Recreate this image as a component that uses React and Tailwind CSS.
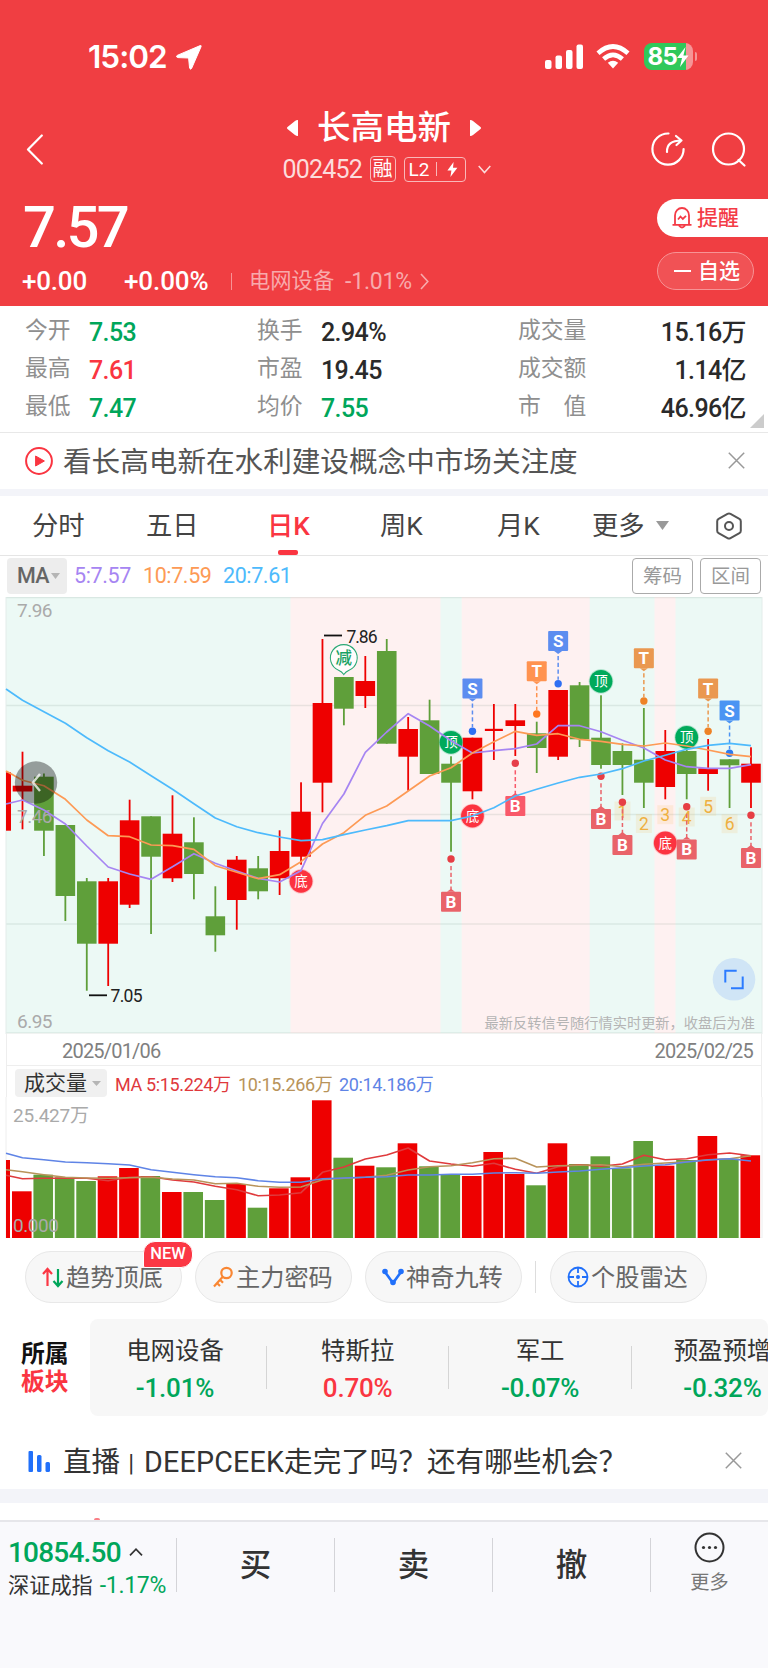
import React from 'react';

const RED = '#ee0000';
const GREEN = '#5f9f3a';

// center of the n-th candle
const cx = (i) => 22.5 + (i - 1) * 21.426;

// [direction, body top, body bottom, high, low, volume top]
const candles = [
  ['up', 785.7, 791.5, 751.7, 829.3, 1191.3],
  ['down', 776.7, 830.7, 773.5, 856, 1174.7],
  ['down', 825, 896, 825, 921, 1177.3],
  ['down', 881.3, 943.7, 878, 990.7, 1181],
  ['up', 881.3, 943.7, 878, 986, 1176.3],
  ['up', 820.3, 904.7, 799.7, 908, 1168],
  ['down', 816.3, 856.7, 816.3, 934, 1176],
  ['up', 833.7, 878.3, 795.3, 882, 1192],
  ['down', 842.3, 874, 817.3, 899.3, 1192],
  ['down', 916.3, 935.3, 886.3, 951.7, 1200],
  ['up', 859.7, 900, 856, 929.7, 1184],
  ['down', 868.3, 891.3, 856, 899.3, 1207.7],
  ['up', 851, 878.3, 830.3, 895, 1188.3],
  ['up', 811.7, 856.7, 782.3, 864.7, 1177.3],
  ['up', 703, 782.7, 639, 812.3, 1100.3],
  ['down', 677, 708.7, 677, 725.3, 1157.7],
  ['up', 681, 696, 656, 708, 1165.7],
  ['down', 651, 743.7, 639, 743.7, 1167.3],
  ['up', 729, 756.7, 717, 790.7, 1143.3],
  ['down', 720.3, 774, 699.7, 774, 1166.3],
  ['down', 763.7, 782.7, 756.3, 851.7, 1174.3],
  ['up', 737.7, 791.3, 737.7, 799.3, 1176],
  ['up', 728.8, 731, 704, 760, 1152],
  ['up', 720.3, 726, 704, 756, 1174],
  ['down', 733.3, 748, 721.7, 773, 1185.3],
  ['up', 690, 756.7, 690, 760, 1143.3],
  ['down', 685.3, 739.3, 682, 747, 1164],
  ['down', 737.7, 765, 695.3, 768.7, 1156.3],
  ['down', 751, 765, 743.3, 795, 1168.3],
  ['down', 759.7, 782.7, 708, 808, 1141],
  ['up', 751, 787, 730, 799.3, 1165.7],
  ['down', 751, 774, 746, 799.3, 1160],
  ['up', 768.3, 774, 739, 790.7, 1136],
  ['down', 759.3, 765.3, 759.3, 808, 1158.7],
  ['up', 763.7, 782.7, 747.3, 808, 1155.3],
];

const ma5 = [804, 800, 810, 824, 846, 867, 874, 879.3, 866.7, 853.7, 863.3, 871, 878.3, 882, 870.7, 823.5, 794, 752.3, 732, 713.7, 726, 740.7, 753, 750.7, 748.7, 744, 725.7, 725.7, 731.7, 740.3, 748, 760, 766.7, 768.3, 768.3, 764.7];
const ma10 = [771, 780.3, 785.7, 799.3, 820, 835.7, 836.7, 845, 845.7, 849.3, 865.7, 872.3, 878.7, 874.7, 861.7, 844, 832.7, 815.3, 806, 791, 776, 767.7, 753, 741.7, 731.3, 735.3, 733.7, 739.3, 741.3, 744.3, 746, 743, 746, 750, 754.3, 756.7];
const ma20 = [689, 700.3, 711.7, 723.3, 737.7, 750.7, 762, 775.7, 789.3, 803.7, 818, 826.7, 832.7, 837, 840.7, 839.7, 834.7, 830, 825.7, 820.7, 820.7, 820.7, 816, 807.7, 796, 789.3, 783, 777.3, 774, 768.7, 761, 755.3, 749.3, 745.3, 743.3, 745.7];

const vol5 = [1175.3, 1178.7, 1178.3, 1178.3, 1178.3, 1180.7, 1177.3, 1176.7, 1180, 1182, 1186.3, 1189.7, 1195.7, 1195, 1192.7, 1172.3, 1167, 1159, 1155, 1148, 1161, 1164, 1166.3, 1163.3, 1169.3, 1173.3, 1166.7, 1164.7, 1166.3, 1164, 1155.3, 1159.7, 1158.7, 1154.7, 1153, 1155.7];
const vol10 = [1169.7, 1171.7, 1174.7, 1177.3, 1178, 1178.3, 1177.7, 1177.3, 1179, 1180, 1183.7, 1183.3, 1186.3, 1187.3, 1187, 1179.7, 1178.3, 1177.3, 1175.3, 1170, 1166.7, 1165.7, 1162.7, 1158.7, 1158.3, 1167, 1165.7, 1165.3, 1164.7, 1166.7, 1164.3, 1163, 1161.7, 1159.7, 1158.7, 1155.7];
const vol20 = [1153.3, 1157.7, 1159.7, 1162, 1162.7, 1163.7, 1165, 1169.7, 1172.3, 1174.7, 1176.7, 1177.7, 1180.7, 1182.3, 1182.3, 1178.7, 1178, 1177.3, 1176.7, 1175, 1175, 1174.3, 1174.3, 1173, 1172.7, 1173.3, 1172, 1171, 1169.3, 1167.7, 1166, 1164.7, 1162, 1160, 1158.7, 1161];

const toPoints = (values) =>
  values.map((y, i) => `${i === 0 ? 6 : cx(i).toFixed(1)},${y}`).join(' ');

// letter flags: [letter, candle, dot y, box color, dot color]
const flags = [
  ['S', 22, 731.3, '#5c8df0', '#2e6ff3'],
  ['T', 25, 714, '#ff9350', '#ff7620'],
  ['S', 26, 683.7, '#5c8df0', '#2e6ff3'],
  ['T', 30, 701, '#ea9850', '#ee8227'],
  ['T', 33, 731.3, '#ea9850', '#ee8227'],
  ['S', 34, 753.3, '#4b94f3', '#2b7bf0'],
  ['B', 24, 763.3, '#f9596a', '#e63e4a'],
  ['B', 21, 859, '#e96369', '#e63e44'],
  ['B', 28, 776.3, '#e96369', '#e63e44'],
  ['B', 29, 802.3, '#e96369', '#e63e44'],
  ['B', 32, 806.7, '#e96369', '#e63e44'],
  ['B', 35, 815.3, '#e96369', '#e63e44'],
];

const rounds = [
  ['顶', 21, 742.3, '#00aa5b'],
  ['顶', 28, 681.3, '#00aa5b'],
  ['顶', 32, 737.3, '#00aa5b'],
  ['底', 14, 881.3, '#fc3340'],
  ['底', 22, 816, '#fc3340'],
  ['底', 31, 843, '#fc3340'],
];

const counts = [
  ['1', 29, 811],
  ['2', 30, 823.5],
  ['3', 31, 814.7],
  ['4', 32, 817],
  ['5', 33, 806.3],
  ['6', 34, 823.7],
];

const Flag = ({ letter, x, dot, color, dotColor }) => {
  const below = letter === 'B';
  const top = below ? dot + 32.7 : dot - 52.7;
  const tip = below
    ? `${x - 4},${top} ${x},${top - 3} ${x + 4},${top}`
    : `${x - 4},${top + 20} ${x},${top + 23} ${x + 4},${top + 20}`;
  return (
    <g>
      <line
        x1={x}
        x2={x}
        y1={below ? dot + 7 : top + 25}
        y2={below ? top - 2 : dot - 4}
        stroke={color}
        strokeWidth="1.5"
        strokeDasharray="4.2 2.6"
      />
      <circle cx={x} cy={dot} r="3.7" fill={dotColor} />
      <rect x={x - 10} y={top} width="20" height="20" rx="1" fill={color} />
      <polygon points={tip} fill={color} />
      <text x={x} y={top + 16} textAnchor="middle" fontSize="17" fontWeight="700" fill="#fff">
        {letter}
      </text>
    </g>
  );
};

const PriceChart = () => (
  <svg className="block h-[437px] w-[768px]" viewBox="0 597 768 437">
    <rect x="6" y="597" width="756" height="436" fill="#ecf9f5" />
    <rect x="290.5" y="597" width="150" height="436" fill="#fef1f1" />
    <rect x="461.7" y="597" width="128" height="436" fill="#fef1f1" />
    <rect x="654.5" y="597" width="21" height="436" fill="#fef1f1" />
    {[597.5, 705.5, 814.5, 924, 1033].map((y) => (
      <line key={y} x1="6" x2="762" y1={y} y2={y} stroke="#5a7a70" strokeOpacity="0.13" strokeWidth="1.3" />
    ))}
    <line x1="6" x2="6" y1="597" y2="1034" stroke="#e3ecea" />
    <line x1="762" x2="762" y1="597" y2="1034" stroke="#e3ecea" />

    <rect x="6" y="772.3" width="5" height="58.4" fill={RED} />
    {candles.map(([dir, top, bottom, high, low], n) => {
      const x = cx(n + 1);
      const fill = dir === 'up' ? RED : GREEN;
      return (
        <g key={n}>
          <rect x={x - 0.9} y={high} width="1.8" height={low - high} fill={fill} />
          <rect x={x - (n === 22 ? 9 : 9.8)} y={top} width={n === 22 ? 18 : 19.6} height={bottom - top} fill={fill} />
        </g>
      );
    })}

    <g fill="#aaa" fontSize="19" fontWeight="400">
      <text x="17" y="616.5" textLength="35.5">7.96</text>
      <text x="17" y="822.5" textLength="35.5">7.46</text>
      <text x="17" y="1028" textLength="35.5">6.95</text>
    </g>
    <g stroke="#111" strokeWidth="1.8">
      <line x1="324" x2="342" y1="635.5" y2="635.5" />
      <line x1="89" x2="107" y1="995.3" y2="995.3" />
    </g>
    <g fill="#222" fontSize="17.5">
      <text x="346.5" y="642.5" textLength="31">7.86</text>
      <text x="110.5" y="1002" textLength="32">7.05</text>
    </g>

    {counts.map(([label, i, y]) => (
      <g key={label}>
        <rect x={cx(i) - 8} y={y - 9.5} width="16" height="19" fill="#f5b041" fillOpacity="0.13" />
        <text x={cx(i)} y={y + 6.5} textAnchor="middle" fontSize="17.5" fill="#efb040">
          {label}
        </text>
      </g>
    ))}
    {rounds.map(([label, i, y, color]) => (
      <g key={`${label}${i}`}>
        <circle cx={cx(i)} cy={y} r="12.3" fill={color} fillOpacity="0.25" />
        <circle cx={cx(i)} cy={y} r="11.4" fill={color} />
        <text x={cx(i)} y={y + 5} textAnchor="middle" fontSize="13.5" fill="#fff">
          {label}
        </text>
      </g>
    ))}
    {flags.map(([letter, i, dot, color, dotColor]) => (
      <Flag key={`${letter}${i}`} letter={letter} x={cx(i)} dot={dot} color={color} dotColor={dotColor} />
    ))}
    <path
      d="M339 670.5 A13.4 13.4 0 1 1 348.6 670.5 Q346 671.5 343.8 674.5 Q341.6 671.5 339 670.5Z"
      fill="#fff"
      fillOpacity="0.8"
      stroke="#28a874"
      strokeWidth="1.1"
    />
    <text x="343.8" y="664" textAnchor="middle" fontSize="16.5" fontWeight="500" fill="#18a263">减</text>

    <g fill="none" strokeWidth="1.7" strokeLinejoin="round">
      <polyline points={toPoints(ma5)} stroke="#a685f2" />
      <polyline points={toPoints(ma10)} stroke="#fd9a55" />
      <polyline points={toPoints(ma20)} stroke="#4dbafc" />
    </g>

    <circle cx="36" cy="782.5" r="21.2" fill="#000" fillOpacity="0.37" />
    <path d="M40 774 L33 782.5 L40 791" fill="none" stroke="#fff" strokeOpacity="0.75" strokeWidth="2.4" />

    <circle cx="734" cy="979.3" r="21.3" fill="#d0e5f6" />
    <path d="M725.3 982.5 V970.7 H736.7 M742.7 976.5 V988.3 H731" fill="none" stroke="#2b7bff" strokeWidth="2" />

    <text x="484.5" y="1028" fontSize="14.2" fill="#b4b4b4" textLength="270.5">
      最新反转信号随行情实时更新，收盘后为准
    </text>
  </svg>
);

const VolumeChart = () => (
  <svg className="block h-[141px] w-[768px]" viewBox="0 1097 768 141">
    <line x1="6" x2="6" y1="1097" y2="1238" stroke="#eee" />
    <line x1="762" x2="762" y1="1097" y2="1238" stroke="#eee" />
    <line x1="6" x2="762" y1="1238" y2="1238" stroke="#eee" />
    <rect x="6" y="1160" width="4" height="78" fill={RED} />
    {candles.map((c, n) => (
      <rect
        key={n}
        x={cx(n + 1) - 10.5}
        y={c[5]}
        width="19.6"
        height={1238 - c[5]}
        fill={c[0] === 'up' ? RED : GREEN}
      />
    ))}
    <g fill="none" strokeWidth="1.6" strokeLinejoin="round">
      <polyline points={toPoints(vol5)} stroke="#df3a3c" />
      <polyline points={toPoints(vol10)} stroke="#b8935a" />
      <polyline points={toPoints(vol20)} stroke="#5f84e6" />
    </g>
    <g fill="#aaa" fontSize="19">
      <text x="13" y="1121.5" textLength="76">25.427万</text>
      <text x="13" y="1231.5" textLength="46">0.000</text>
    </g>
  </svg>
);

const StatusBar = () => (
  <div className="flex h-[56px] items-end pl-[88px] pr-[71px] font-['Inter']">
    <div className="flex h-[26px] items-center">
      <span className="w-[88px] text-[31.5px] font-semibold leading-none tracking-[-1px]">15:02</span>
      <svg className="h-[25px] w-[26px]" viewBox="0 0 26 25">
        <path d="M24.2 0.6 Q25.6 0.2 25 1.8 L15.6 23.4 Q14.6 25 13.6 23.2 L12.6 13 L2 12.6 Q-0.6 12 1.2 10.4Z" fill="#fff" stroke="#fff" strokeLinejoin="round" />
      </svg>
    </div>
    <div className="ml-auto flex h-[27px] items-center">
      <svg className="h-[25px] w-[38px]" viewBox="0 0 38 25" fill="#fff">
        <rect x="0" y="16" width="6.5" height="9" rx="2" />
        <rect x="10.5" y="11.5" width="6.5" height="13.5" rx="2" />
        <rect x="21" y="6" width="6.5" height="19" rx="2" />
        <rect x="31.5" y="0.5" width="6.5" height="24.5" rx="2" />
      </svg>
      <svg className="ml-[13px] h-[25px] w-[34px]" viewBox="0 0 34 25">
        <g fill="none" stroke="#fff" strokeWidth="4.6">
          <path d="M2 9.2 Q17 -4.2 32 9.2" />
          <path d="M7.6 15 Q17 6.6 26.4 15" />
        </g>
        <path d="M11.8 18.8 Q17 14.6 22.2 18.8 L17 24.6Z" fill="#fff" />
      </svg>
      <div className="ml-[14px] flex h-[27px] w-[49px] items-center overflow-hidden rounded-lg bg-[linear-gradient(90deg,#30c85a_85%,#f69496_85%)] pl-1">
        <span className="text-[24px] font-bold leading-none tracking-[-0.5px]">85</span>
        <svg className="-ml-[1px] h-[20px] w-[13px]" viewBox="0 0 13 20">
          <path d="M9.5 0 L1 11 H6 L4 20 L12.5 8.4 H7.4Z" fill="#fff" />
        </svg>
      </div>
      <span className="ml-[2px] h-[9px] w-[2.5px] rounded-r bg-[#f69496]"></span>
    </div>
  </div>
);

const Header = () => (
  <div className="flex h-[306px] flex-col bg-[#f03e42] pt-[14px] text-white">
    <StatusBar />
    <div className="relative flex h-[122px] flex-col items-center pt-[37px]">
      <div className="flex h-[41px] w-[194px] items-center justify-between">
        <svg className="h-[16px] w-[11px]" viewBox="0 0 11 16"><path d="M11 0 V16 Q9 16 8 15 L0.5 9 Q-0.5 8 0.5 7 L8 1 Q9 0 11 0Z" fill="#fff" /></svg>
        <span className="text-[33.5px] font-medium leading-none">长高电新</span>
        <svg className="h-[16px] w-[11px]" viewBox="0 0 11 16"><path d="M0 0 V16 Q2 16 3 15 L10.5 9 Q11.5 8 10.5 7 L3 1 Q2 0 0 0Z" fill="#fff" /></svg>
      </div>
      <div className="ml-[5px] flex h-[42px] w-[208px] items-center">
        <span className="w-[87px] text-[25px] leading-none tracking-[-0.8px] text-[#fcdcdc]">002452</span>
        <span className="flex h-[26px] w-[26px] items-center justify-center rounded border border-[#f9b8b9] text-[20px] leading-none">融</span>
        <span className="ml-2 flex h-[25px] w-[62px] items-center rounded border border-[#f9b8b9] pl-1">
          <span className="text-[19px] leading-none">L2</span>
          <span className="ml-[7px] h-[14px] w-px bg-[#f9b8b9]"></span>
          <svg className="ml-[10px] h-[15px] w-[11px]" viewBox="0 0 11 15"><path d="M6.6 0 L0.4 8.6 H4.4 L3.4 15 L10.4 5.8 H6Z" fill="#fff" /></svg>
        </span>
        <svg className="ml-[12px] h-[9px] w-[13px]" viewBox="0 0 13 9"><path d="M0.7 0.9 L6.5 7.6 L12.3 0.9" fill="none" stroke="#fcdcdc" strokeWidth="1.5" /></svg>
      </div>
      <svg className="absolute left-[26px] top-[64px] h-[31px] w-[17px]" viewBox="0 0 17 31"><path d="M15.8 1.5 L2 15.5 L15.8 29.5" fill="none" stroke="#fff" strokeWidth="2.2" strokeLinecap="round" strokeLinejoin="round" /></svg>
      <svg className="absolute left-[650px] top-[60px] h-[38px] w-[98px]" viewBox="650 130 98 38" fill="none" stroke="#fff" strokeWidth="2.2" strokeLinecap="round" strokeLinejoin="round">
        <path d="M668.5 133.5 A15.6 15.6 0 1 0 683.6 149" />
        <path d="M667 152 Q666.5 140.5 681.5 140.5 M676 136 L681.5 140.5 L676.5 145" />
        <circle cx="728.5" cy="149" r="15.5" />
        <path d="M738.5 160 L744.5 165.5" />
      </svg>
    </div>
    <div className="flex flex-1 justify-between">
      <div className="pt-[7px]">
        <div className="flex h-[56px] items-center pl-[23px] text-[58px] font-medium leading-none tracking-[-2.8px]">7.57</div>
        <div className="mt-[14px] flex h-[24px] items-center pl-[22px] leading-none">
          <span className="w-[102px] text-[26px] font-medium tracking-[-0.2px]">+0.00</span>
          <span className="w-[107px] text-[26px] font-medium tracking-[-0.1px]">+0.00%</span>
          <span className="h-[17px] w-px bg-[#f79395]"></span>
          <span className="ml-[17px] w-[96px] text-[21.3px] text-[#f8aaac]">电网设备</span>
          <span className="text-[23px] tracking-[-0.2px] text-[#f8aaac]">-1.01%</span>
          <svg className="ml-[8px] h-[17px] w-[9px]" viewBox="0 0 9 17"><path d="M1 1 L7.8 8.5 L1 16" fill="none" stroke="#f8aaac" strokeWidth="1.6" /></svg>
        </div>
      </div>
      <div className="w-[111px] pt-[7px]">
        <div className="flex h-[38px] items-center rounded-l-full bg-white pl-[15px] text-[#f43b46]">
          <svg className="h-[22px] w-[20px]" viewBox="0 0 20 22" fill="none" stroke="#f43b46" strokeWidth="1.8">
            <path d="M3 17.5 V8.5 A7 7.5 0 0 1 17 8.5 V17.5 M0.5 17.8 H19.5 M7 18.5 Q10 22.5 13 18.5" />
            <path d="M6 12.5 L8.5 9.5 L10.8 12 L14 8.8" />
          </svg>
          <span className="ml-[5px] text-[21px] font-medium leading-none">提醒</span>
        </div>
        <div className="mt-[15px] flex h-[38px] w-[97px] items-center rounded-full border border-[#f79395] bg-[#f15255] pl-[16px]">
          <span className="h-[2px] w-[17px] bg-white"></span>
          <span className="ml-[7px] text-[21px] font-medium leading-none">自选</span>
        </div>
      </div>
    </div>
  </div>
);

const stats = [
  ['今开', '7.53', 'text-[#00a65a]', '换手', '2.94%', 'text-[#2a2a2a]', '成交量', '15.16万'],
  ['最高', '7.61', 'text-[#fa3541]', '市盈', '19.45', 'text-[#2a2a2a]', '成交额', '1.14亿'],
  ['最低', '7.47', 'text-[#00a65a]', '均价', '7.55', 'text-[#00a65a]', '市　值', '46.96亿'],
];

const Stats = () => (
  <div className="relative h-[127px] border-b border-[#e8e8e8] pt-[7px]">
    {stats.map(([a, av, ac, b, bv, bc, c, cv]) => (
      <div key={a} className="flex h-[37.7px] items-center pl-[25px] pr-[22px] text-[25px] leading-none tracking-[-0.6px]">
        <span className="w-[64px] text-[22.8px] tracking-normal text-[#8f8f8f]">{a}</span>
        <span className={`w-[168px] pt-[2px] font-medium ${ac}`}>{av}</span>
        <span className="w-[64px] text-[22.8px] tracking-normal text-[#8f8f8f]">{b}</span>
        <span className={`w-[197px] pt-[2px] font-medium ${bc}`}>{bv}</span>
        <span className="text-[22.8px] tracking-normal text-[#8f8f8f]">{c}</span>
        <span className="ml-auto pt-[2px] font-medium text-[#2a2a2a]">{cv}</span>
      </div>
    ))}
    <svg className="absolute bottom-[4px] right-[4px] h-[14px] w-[14px]" viewBox="0 0 14 14"><path d="M14 0 V14 H0Z" fill="#ccc" /></svg>
  </div>
);

const Close = () => (
  <svg className="mb-[2px] h-[17px] w-[17px]" viewBox="0 0 17 17"><path d="M0.8 0.8 L16.2 16.2 M16.2 0.8 L0.8 16.2" stroke="#999" strokeWidth="1.5" /></svg>
);

const Tabs = () => (
  <div className="relative flex h-[60px] items-center border-b border-[#e5e5e5] pl-[32px] text-[26.3px] leading-none text-[#444]">
    <span className="w-[114px] pt-[2px]">分时</span>
    <span className="w-[121px] pt-[2px]">五日</span>
    <span className="w-[113px] pt-[2px] font-medium text-[#fa3541]">日K</span>
    <span className="w-[117px] pt-[2px]">周K</span>
    <span className="w-[95px] pt-[2px]">月K</span>
    <span className="pt-[2px]">更多</span>
    <svg className="ml-[11px] h-[9px] w-[13px]" viewBox="0 0 13 9"><path d="M0 0 H13 L6.5 9Z" fill="#999" /></svg>
    <svg className="ml-[47px] h-[28px] w-[26px]" viewBox="0 0 26 28" fill="none" stroke="#555" strokeWidth="2" strokeLinejoin="round">
      <path d="M11.5 1.8 Q13 1 14.5 1.8 L23.4 6.8 Q24.8 7.6 24.8 9.2 V18.8 Q24.8 20.4 23.4 21.2 L14.5 26.2 Q13 27 11.5 26.2 L2.6 21.2 Q1.2 20.4 1.2 18.8 V9.2 Q1.2 7.6 2.6 6.8Z" />
      <circle cx="13" cy="14" r="4" />
    </svg>
    <span className="absolute bottom-0 left-[278px] h-[5px] w-[20px] rounded-[2px] bg-[#fa3541]"></span>
  </div>
);

const MaLegend = () => (
  <div className="flex h-[41px] items-start pl-[7px] pr-[7px] pt-[2px] text-[21.5px] leading-none">
    <span className="flex h-[36px] w-[60px] items-center rounded bg-[#ededed] pl-[10px] font-medium tracking-[-0.8px] text-[#666]">
      MA
      <svg className="ml-[2px] h-[6px] w-[9px]" viewBox="0 0 9 6"><path d="M0 0 H9 L4.5 6Z" fill="#b5b5b5" /></svg>
    </span>
    <div className="flex h-[36px] items-center pl-[7px] tracking-[-0.4px]">
      <span className="w-[69px] text-[#a685f2]">5:7.57</span>
      <span className="w-[80px] text-[#fd9a55]">10:7.59</span>
      <span className="text-[#4dbafc]">20:7.61</span>
    </div>
    <span className="ml-auto flex h-[36px] w-[61px] items-center justify-center rounded border border-[#aaa] pt-[2px] text-[19.5px] text-[#999]">筹码</span>
    <span className="ml-[7px] flex h-[36px] w-[61px] items-center justify-center rounded border border-[#aaa] pt-[2px] text-[19.5px] text-[#999]">区间</span>
  </div>
);

const Chip = ({ icon, label, className }) => (
  <div className={`relative flex h-[52px] w-[157px] items-center rounded-full border border-[#e8e8e8] bg-[#f7f7f7] pl-[16px] text-[24.2px] leading-none text-[#666] ${className}`}>
    <svg className="mr-[2px] h-[22px] w-[22px] shrink-0" viewBox="0 0 22 22" fill="none" strokeWidth="2.2">{icon}</svg>
    <span className="whitespace-nowrap pt-[2px]">{label}</span>
    {label === '趋势顶底' && (
      <span className="absolute -top-[11px] right-[-12px] flex h-[27px] w-[50px] items-center justify-center rounded-[12px] rounded-bl-[2px] border border-white bg-[#fb3744] text-[16.5px] font-medium text-white">NEW</span>
    )}
  </div>
);

const Chips = () => (
  <div className="flex items-center pl-[25px] pt-[13px]">
    <Chip
      label="趋势顶底"
      icon={
        <>
          <path d="M5.5 20 V3 M1 8 L5.5 3 L10 8" stroke="#fb3744" />
          <path d="M16 3 V20 M11.5 15 L16 20 L20.5 15" stroke="#00a65a" />
        </>
      }
    />
    <Chip
      className="ml-[13px]"
      label="主力密码"
      icon={
        <>
          <circle cx="14.5" cy="7" r="5.2" stroke="#f98632" />
          <path d="M11 10.5 L2 20.5 M5 17 L8 20 M8 13.8 L11 16.8" stroke="#f98632" />
        </>
      }
    />
    <Chip
      className="ml-[13px]"
      label="神奇九转"
      icon={
        <>
          <path d="M3 6 L11 17 L19 6" stroke="#2170fa" strokeWidth="2.6" />
          <g fill="#2170fa"><circle cx="3" cy="5.5" r="2.8" /><circle cx="11" cy="16.5" r="2.8" /><circle cx="19" cy="5.5" r="2.8" /></g>
        </>
      }
    />
    <span className="ml-[13px] h-[32px] w-px bg-[#ddd]"></span>
    <Chip
      className="ml-[14px]"
      label="个股雷达"
      icon={
        <>
          <circle cx="11" cy="11" r="9.5" stroke="#2170fa" strokeWidth="1.8" />
          <path d="M11 1 V7 M11 15 V21 M1 11 H7 M15 11 H21" stroke="#2170fa" strokeWidth="1.8" />
          <circle cx="11" cy="11" r="2" fill="#2170fa" />
        </>
      }
    />
  </div>
);

const sectors = [
  ['电网设备', '-1.01%', 'text-[#00a65a]'],
  ['特斯拉', '0.70%', 'text-[#fa3541]'],
  ['军工', '-0.07%', 'text-[#00a65a]'],
  ['预盈预增', '-0.32%', 'text-[#00a65a]'],
];

const Sectors = () => (
  <div className="mt-[16px] flex h-[97px] overflow-hidden">
    <div className="flex w-[90px] shrink-0 flex-col justify-center pl-[21px] text-[23.8px] font-bold leading-[28px] text-[#111]">
      <span>所属</span>
      <span className="text-[#fa3541]">板块</span>
    </div>
    <div className="flex w-[678px] shrink-0 items-center overflow-hidden rounded-lg bg-[#f7f7f7]">
      {sectors.map(([name, pct, color], i) => (
        <div key={name} className="flex shrink-0 items-center">
          {i > 0 && <span className="h-[43px] w-px bg-[#d5d5d5]"></span>}
          <div className={`flex flex-col items-center pt-[4px] ${i === 0 ? 'w-[176px] pr-[6px]' : 'w-[181.4px]'}`}>
            <span className="text-[24.4px] leading-[30px] text-[#333]">{name}</span>
            <span className={`mt-[7px] text-[26px] font-medium leading-[30px] tracking-[-0.2px] ${color}`}>{pct}</span>
          </div>
        </div>
      ))}
    </div>
  </div>
);

const BottomBar = () => (
  <div className="h-[148px] border-t-2 border-[#e6e6ea] bg-[#f9f9fc] pt-[15px]">
    <div className="flex h-[55px] items-center">
      <div className="w-[176px] pl-[8px] pt-[7px] leading-none">
        <div className="flex items-center text-[28px] font-medium tracking-[-0.8px] text-[#00a65a]">
          10854.50
          <svg className="mb-[3px] ml-[8px] h-[8px] w-[14px]" viewBox="0 0 14 8"><path d="M1 7.3 L7 1.2 L13 7.3" fill="none" stroke="#333" strokeWidth="1.7" /></svg>
        </div>
        <div className="mt-[7px] flex items-center whitespace-nowrap text-[21.2px] text-[#333]">
          深证成指
          <span className="ml-[7px] text-[23px] tracking-[-0.3px] text-[#00a65a]">-1.17%</span>
        </div>
      </div>
      {['买', '卖', '撤'].map((t) => (
        <div key={t} className="flex h-[54px] w-[158px] items-center justify-center border-l border-[#d4d4d8] pt-[3px] text-[31.5px] font-medium leading-none text-[#333]">
          {t}
        </div>
      ))}
      <div className="flex h-[54px] flex-1 flex-col items-center border-l border-[#d4d4d8]">
        <svg className="-mt-[6px] h-[31px] w-[31px] shrink-0" viewBox="0 0 31 31">
          <circle cx="15.5" cy="15.5" r="14" fill="none" stroke="#333" strokeWidth="2" />
          <g fill="#333"><circle cx="9.5" cy="15.5" r="1.6" /><circle cx="15.5" cy="15.5" r="1.6" /><circle cx="21.5" cy="15.5" r="1.6" /></g>
        </svg>
        <span className="mt-[9px] text-[19.2px] leading-[22px] text-[#777]">更多</span>
      </div>
    </div>
  </div>
);

const App = () => {
  return (
    <div className="h-[1669px] w-[768px] overflow-hidden bg-white font-[Roboto,'Noto_Sans_CJK_SC',sans-serif]">
      <Header />
      <Stats />
      <div className="flex h-[56px] items-center pl-[25px] pr-[23px]">
        <svg className="h-[28px] w-[28px]" viewBox="0 0 28 28">
          <circle cx="14" cy="14" r="12.9" fill="none" stroke="#fa3541" strokeWidth="2" />
          <path d="M10.6 9 L19.4 14 L10.6 19Z" fill="#fa3541" stroke="#fa3541" strokeLinejoin="round" />
        </svg>
        <span className="ml-[10px] flex-1 pt-[3px] text-[28.6px] leading-none text-[#555]">看长高电新在水利建设概念中市场关注度</span>
        <Close />
      </div>
      <div className="h-[7px] bg-[#f3f4f9]"></div>
      <Tabs />
      <MaLegend />
      <PriceChart />

      <div className="mx-[6px] flex h-[32px] items-center justify-between border-x border-b border-[#eee] pl-[55px] pr-[8px] pt-[2px] text-[20px] leading-none tracking-[-0.8px] text-[#808080]">
        <span>2025/01/06</span>
        <span>2025/02/25</span>
      </div>
      <div className="mx-[6px] flex h-[31px] items-end border-x border-[#eee] pl-[8px] text-[18px] leading-none tracking-[-0.35px]">
        <span className="flex h-[28px] w-[92px] items-center rounded bg-[#f0f0f0] pl-[9px] text-[21px] tracking-normal text-[#333]">
          成交量
          <svg className="ml-[5px] h-[5px] w-[9px]" viewBox="0 0 9 5"><path d="M0 0 H9 L4.5 5Z" fill="#b5b5b5" /></svg>
        </span>
        <div className="flex h-[28px] items-center whitespace-nowrap pt-[3px]">
          <span className="ml-[8px] w-[123px] text-[#e0383c]">MA 5:15.224万</span>
          <span className="w-[101px] text-[#b8935a]">10:15.266万</span>
          <span className="text-[#5f84e6]">20:14.186万</span>
        </div>
      </div>
      <VolumeChart />

      <Chips />
      <Sectors />
      <div className="mt-[17px] flex h-[56px] items-center pl-[28px] pr-[26px]">
        <svg className="h-[21px] w-[22px]" viewBox="0 0 22 21" fill="#2170fa">
          <rect x="0.5" y="0" width="4.5" height="21" rx="1" />
          <rect x="9" y="4" width="4.5" height="17" rx="1.5" />
          <rect x="17.5" y="11" width="4.5" height="10" rx="1.5" />
        </svg>
        <div className="ml-[13px] flex flex-1 items-center whitespace-nowrap pt-[3px] text-[28.6px] leading-none text-[#333]">
          直播
          <span className="ml-[8px] mr-[10px] text-[24px]">|</span>
          <span className="tracking-[0.2px]">DEEPCEEK</span>
          走完了吗？还有哪些机会？
        </div>
        <Close />
      </div>
      <div className="h-[14px] bg-[#f3f4f9]"></div>
      <div className="flex h-[17px] items-end pl-[94px]">
        <span className="h-[2px] w-[6px] rounded-t-full bg-[#fa7f86]"></span>
      </div>
      <BottomBar />
    </div>
  );
};

export default App;
